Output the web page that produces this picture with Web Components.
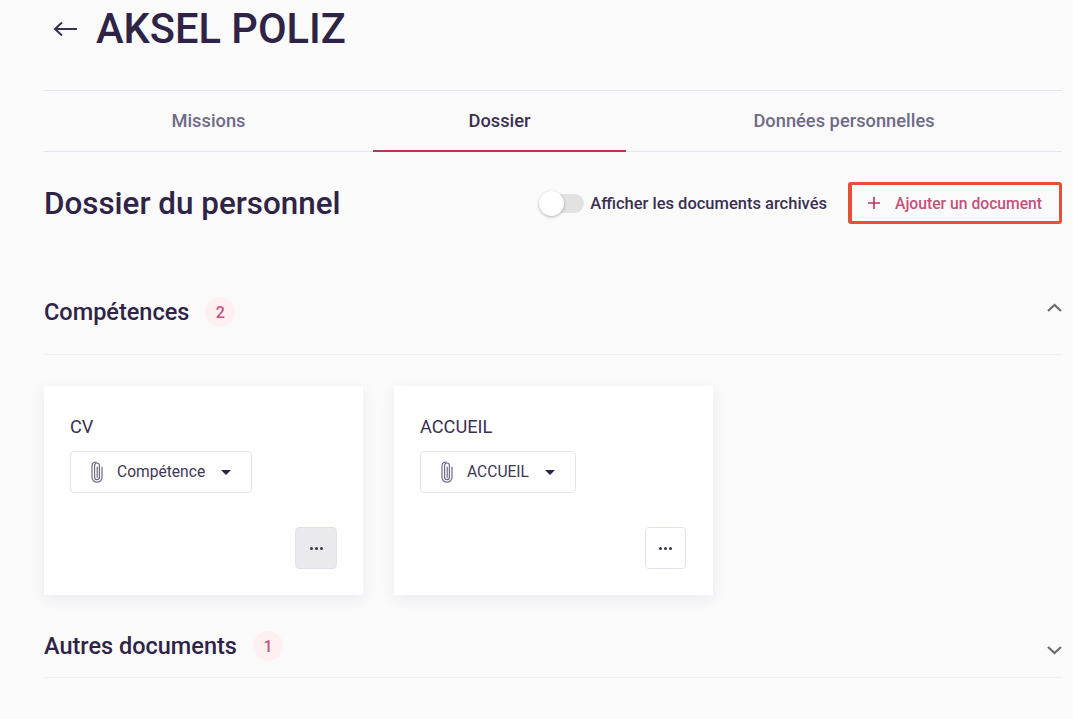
<!DOCTYPE html>
<html lang="fr">
<head>
<meta charset="utf-8">
<title>Dossier</title>
<style>
  html, body { margin: 0; height: 100%; overflow: hidden; }
  body {
    background: #fafafb;
    color: #2f2346;
    font-family: Roboto, "Liberation Sans", sans-serif;
  }
</style>
</head>
<body>

<agent-page>
  <page-title slot="title">AKSEL POLIZ</page-title>
  <tab-bar slot="tabs">
    <tab-item>Missions</tab-item>
    <tab-item active>Dossier</tab-item>
    <tab-item>Données personnelles</tab-item>
  </tab-bar>
  <dossier-head slot="head">Dossier du personnel</dossier-head>

  <doc-section slot="sections" label="Compétences" count="2" open>
    <doc-card title="CV" tag="Compétence" hovered></doc-card>
    <doc-card title="ACCUEIL" tag="ACCUEIL"></doc-card>
  </doc-section>
  <doc-section slot="sections" label="Autres documents" count="1"></doc-section>
</agent-page>

<script>
const clipIcon = `<svg class="clip" width="16" height="22" viewBox="0 0 16 22" fill="none" stroke="#6f6a86" stroke-width="1.2" stroke-linecap="round"><path d="M8.2 6v10.2M10.4 4.6v11.6a2.4 2.4 0 0 1-4.8 0V4.4M5.6 4.4a2.4 2.4 0 0 1 4.8 0M13 6.2v10a5 5 0 0 1-10 0V4.6a4.2 4.2 0 0 1 4-3.6"/></svg>`;

class AgentPage extends HTMLElement {
  constructor() {
    super();
    this.attachShadow({ mode: 'open' });
    this.shadowRoot.innerHTML = `
      <style>
        :host { display: block; padding: 0 11px 0 44px; }
      </style>
      <slot name="title"></slot>
      <slot name="tabs"></slot>
      <slot name="head"></slot>
      <slot name="sections"></slot>
    `;
  }
}

class PageTitle extends HTMLElement {
  constructor() {
    super();
    this.attachShadow({ mode: 'open' });
    this.shadowRoot.innerHTML = `
      <style>
        :host { display: flex; align-items: center; height: 58px; padding: 0 0 32px 8px; gap: 18px; }
        svg { display: block; flex: none; }
        h1 { margin: 0; font: 500 41.6px/60px Roboto, sans-serif; color: #2f2346; }
      </style>
      <svg width="26" height="26" viewBox="0 0 26 26" fill="none" stroke="#3a3050" stroke-width="2"><path d="M25 14H3M10 7.5 3 14l7 6.5" transform="translate(0 -1)"/></svg>
      <h1><slot></slot></h1>
    `;
  }
}

class TabBar extends HTMLElement {
  constructor() {
    super();
    this.attachShadow({ mode: 'open' });
    this.shadowRoot.innerHTML = `
      <style>
        :host {
          display: grid;
          grid-template-columns: 329px 253px 1fr;
          height: 60px;
          border-top: 1px solid #e6e5ee;
          border-bottom: 1px solid #e6e5ee;
        }
      </style>
      <slot></slot>
    `;
  }
}

class TabItem extends HTMLElement {
  constructor() {
    super();
    this.attachShadow({ mode: 'open' });
    this.shadowRoot.innerHTML = `
      <style>
        :host {
          display: flex;
          align-items: center;
          justify-content: center;
          font: 500 18.3px Roboto, sans-serif;
          color: #6f6a86;
          margin-bottom: -1px;
          border-bottom: 2px solid transparent;
        }
        :host([active]) { color: #3a3050; border-bottom-color: #c2325f; }
      </style>
      <slot></slot>
    `;
  }
}

class DossierHead extends HTMLElement {
  constructor() {
    super();
    this.attachShadow({ mode: 'open' });
    this.shadowRoot.innerHTML = `
      <style>
        :host { display: flex; align-items: center; height: 42px; margin-top: 30px; }
        h2 { margin: 0 auto 0 0; font: 500 31.4px Roboto, sans-serif; color: #2f2346; }
        .toggle { display: flex; align-items: center; gap: 6px; margin-right: 21px; font: 500 16.5px Roboto, sans-serif; color: #3a3050; }
        .track { position: relative; width: 34px; height: 19px; border-radius: 10px; background: #e2e2e2; }
        .knob {
          position: absolute; left: -11px; top: -3px; width: 25px; height: 25px; border-radius: 50%;
          background: #fff; box-shadow: 0 1px 3px rgba(0,0,0,.3);
        }
        .add {
          display: flex; align-items: center; gap: 15px; box-sizing: border-box;
          width: 214px; height: 42px; padding-left: 16px;
          border: solid #e84f39; border-width: 3px 3px 3px 4px;
          border-radius: 3px; font: 500 15.7px Roboto, sans-serif; color: #c5507a;
        }
        .add svg { display: block; flex: none; }
      </style>
      <h2><slot></slot></h2>
      <div class="toggle"><span class="track"><span class="knob"></span></span>Afficher les documents archivés</div>
      <div class="add">
        <svg width="12" height="12" viewBox="0 0 12 12" stroke="#c2325f" stroke-width="1.6"><path d="M6 0v12M0 6h12"/></svg>
        Ajouter un document
      </div>
    `;
  }
}

class DocSection extends HTMLElement {
  constructor() {
    super();
    this.attachShadow({ mode: 'open' });
    const open = this.hasAttribute('open');
    const chevron = open ? 'M1 9 7.5 3 14 9' : 'M1 3 7.5 9 14 3';
    this.shadowRoot.innerHTML = `
      <style>
        :host { display: block; }
        :host([open]) { margin-top: 73px; }
        .row {
          display: flex; align-items: center; gap: 16px; height: 30px;
          padding-bottom: 16px;
          border-bottom: 1px solid #efeef4;
        }
        :host([open]) .row { padding-bottom: 27px; }
        .label { font: 500 23.5px Roboto, sans-serif; color: #2f2346; }
        .count {
          display: flex; align-items: center; justify-content: center;
          width: 30px; height: 30px; border-radius: 50%;
          background: #fdf0f1; color: #c5507a; font: 500 16px Roboto, sans-serif;
        }
        svg { display: block; margin-left: auto; position: relative; top: 4px; }
        :host([open]) svg { top: -4px; }
        .body { display: flex; gap: 31px; }
        .body.filled { padding: 31px 0 36px; }
      </style>
      <div class="row">
        <span class="label">${this.getAttribute('label')}</span>
        <span class="count">${this.getAttribute('count')}</span>
        <svg width="15" height="12" viewBox="0 0 15 12" fill="none" stroke="#6c6c72" stroke-width="2.2">
          <path d="${chevron}"/>
        </svg>
      </div>
      <div class="body ${open ? 'filled' : ''}"><slot></slot></div>
    `;
  }
}

class DocCard extends HTMLElement {
  constructor() {
    super();
    this.attachShadow({ mode: 'open' });
    const hovered = this.hasAttribute('hovered');
    this.shadowRoot.innerHTML = `
      <style>
        :host {
          display: flex; flex-direction: column; box-sizing: border-box;
          width: 319px; height: 209px; padding: 30px 26px 26px;
          background: #fff; box-shadow: 0 4px 14px rgba(40,35,70,.07);
        }
        .title { font: 400 18.2px/21px Roboto, sans-serif; color: #3a3050; }
        .tag {
          display: flex; align-items: center; align-self: flex-start; box-sizing: border-box;
          height: 42px; margin-top: 14px; padding: 0 20px 0 18px;
          border: 1px solid #e2e2ee; border-radius: 4px;
          font: 400 15.6px Roboto, sans-serif; color: #3f3656;
        }
        .clip { display: block; flex: none; margin-right: 12px; }
        .caret { width: 0; height: 0; margin-left: 16px; border: 5px solid transparent; border-top: 5px solid #2f2346; border-bottom: 0; }
        .more {
          display: flex; align-items: center; justify-content: center; gap: 2px;
          box-sizing: border-box; align-self: flex-end; width: ${hovered ? 42 : 41}px; height: 42px; margin-top: auto;
          margin-right: ${hovered ? 0 : 1}px;
          border: 1px solid #e2e2ee; border-radius: 4px;
          background: ${hovered ? '#e9e9ee' : '#fff'};
        }
        .more i { width: 3px; height: 3px; border-radius: 50%; background: #3a3050; }
      </style>
      <div class="title">${this.getAttribute('title')}</div>
      <div class="tag">
        ${clipIcon}
        ${this.getAttribute('tag')}
        <span class="caret"></span>
      </div>
      <div class="more"><i></i><i></i><i></i></div>
    `;
  }
}

customElements.define('agent-page', AgentPage);
customElements.define('page-title', PageTitle);
customElements.define('tab-bar', TabBar);
customElements.define('tab-item', TabItem);
customElements.define('dossier-head', DossierHead);
customElements.define('doc-section', DocSection);
customElements.define('doc-card', DocCard);
</script>
</body>
</html>
